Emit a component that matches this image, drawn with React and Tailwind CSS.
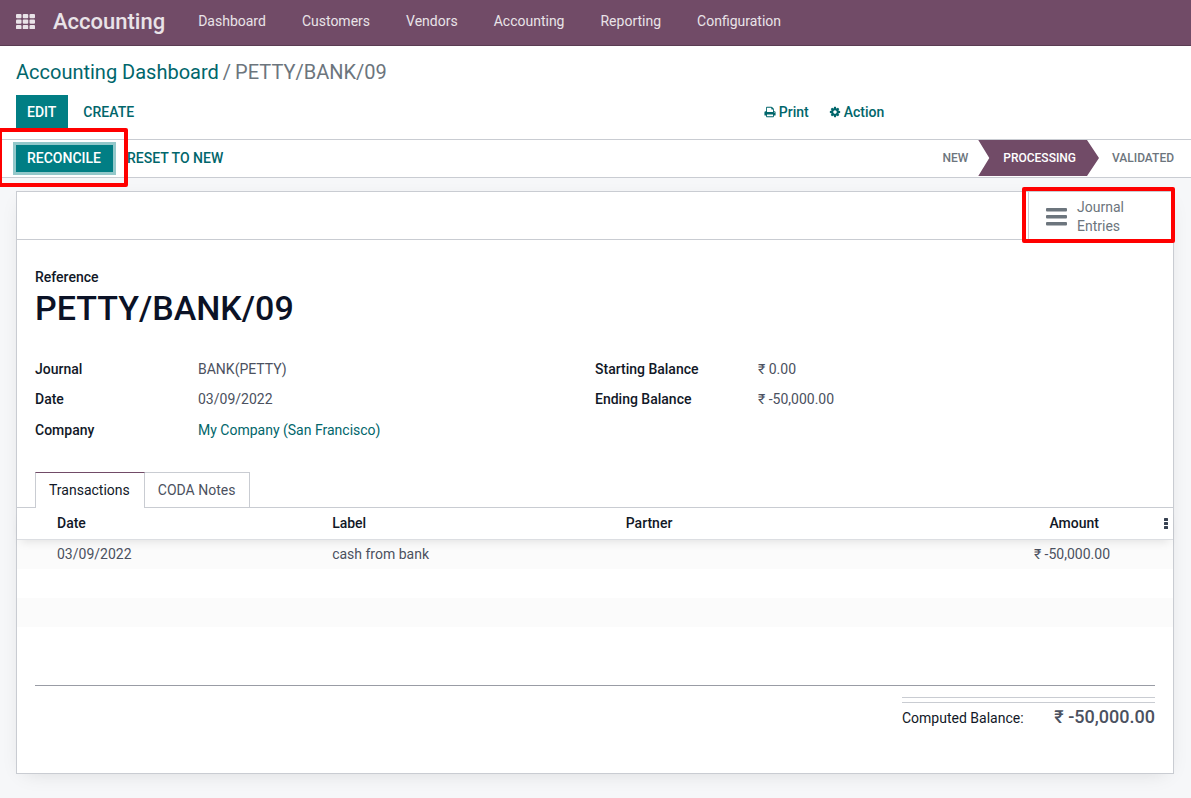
import React from "react";

const MENU = ["Dashboard", "Customers", "Vendors", "Accounting", "Reporting", "Configuration"];

function AppsIcon() {
  return (
    <svg width="19" height="15" viewBox="0 0 19 15" fill="currentColor" aria-hidden="true">
      {[0, 5.5, 11].map((y) =>
        [0, 6.75, 13.5].map((x) => <rect key={`${x}-${y}`} x={x} y={y} width="5.5" height="4.2" rx="1" />)
      )}
    </svg>
  );
}

function PrintIcon() {
  return (
    <svg width="12" height="12" viewBox="0 0 1792 1792" fill="currentColor" aria-hidden="true">
      <path d="M448 1536h896v-256h-896v256zm0-640h896v-384h-160q-40 0-68-28t-28-68v-160h-640v640zm1152 64q0-26-19-45t-45-19-45 19-19 45 19 45 45 19 45-19 19-45zm128 0v416q0 13-9.500 22.500t-22.500 9.500h-224v160q0 40-28 68t-68 28h-960q-40 0-68-28t-28-68v-160h-224q-13 0-22.500-9.500t-9.500-22.500v-416q0-79 56.500-135.500t135.500-56.500h64v-544q0-40 28-68t68-28h672q40 0 88 20t76 48l152 152q28 28 48 76t20 88v256h64q79 0 135.500 56.500t56.500 135.500z" />
    </svg>
  );
}

function CogIcon() {
  return (
    <svg width="12" height="12" viewBox="0 0 1792 1792" fill="currentColor" aria-hidden="true">
      <path d="M1152 896q0-106-75-181t-181-75-181 75-75 181 75 181 181 75 181-75 75-181zm512-109v222q0 12-8 23t-20 13l-185 28q-19 54-39 91 35 50 107 138 10 12 10 25t-9 23q-27 37-99 108t-94 71q-12 0-26-9l-138-108q-44 23-91 38-16 136-29 186-7 28-36 28h-222q-14 0-24.500-8.500t-11.500-21.500l-28-184q-49-16-90-37l-141 107q-10 9-25 9-14 0-25-11-126-114-165-168-7-10-7-23 0-12 8-23 15-21 51-66.500t54-70.500q-27-50-41-99l-183-27q-13-2-21-12.500t-8-23.500v-222q0-12 8-23t19-13l186-28q14-46 39-92-40-57-107-138-10-12-10-24 0-10 9-23 26-36 98.500-107.500t94.500-71.500q13 0 26 10l138 107q44-23 91-38 16-136 29-186 7-28 36-28h222q14 0 24.500 8.500t11.500 21.500l28 184q49 16 90 37l142-107q9-9 24-9 13 0 25 10 129 119 165 170 7 8 7 22 0 12-8 23-15 21-51 66.500t-54 70.500q26 50 41 98l183 28q13 2 21 12.500t8 23.500z" />
    </svg>
  );
}

function BarsIcon() {
  return (
    <svg width="21" height="18" viewBox="0 0 21 18" fill="currentColor" aria-hidden="true">
      <rect x="0" y="0" width="21" height="3.600" rx="1" />
      <rect x="0" y="7" width="21" height="3.600" rx="1" />
      <rect x="0" y="14" width="21" height="3.600" rx="1" />
    </svg>
  );
}

function DotsIcon() {
  return (
    <svg width="4" height="11" viewBox="0 0 4 11" fill="currentColor" aria-hidden="true">
      <rect x="0" y="0" width="4" height="3" rx="0.500" />
      <rect x="0" y="4" width="4" height="3" rx="0.500" />
      <rect x="0" y="8" width="4" height="3" rx="0.500" />
    </svg>
  );
}

function Field({ label, children }) {
  return (
    <div className="flex h-[30px] items-center">
      <dt className="w-[163px] shrink-0 font-medium text-[#111827]">{label}</dt>
      <dd className="text-[#4b5160]">{children}</dd>
    </div>
  );
}

export default function App() {
  return (
    <div className="flex min-h-screen flex-col bg-[#f6f7f9] font-['Roboto',sans-serif] text-[14px] leading-[21px] text-[#111827]">
      <header className="flex h-[46px] items-center border-b border-[#5a3c52] bg-[#714b67] pb-[2px] pl-4 text-[#e9e3e8]">
        <button type="button" aria-label="Apps" className="mr-[18px]">
          <AppsIcon />
        </button>
        <a href="#accounting" className="mr-[33px] text-[22px] font-medium leading-[30px]">Accounting</a>
        <nav className="flex gap-9">
          {MENU.map((item) => (
            <a key={item} href={"#" + item.toLowerCase()}>{item}</a>
          ))}
        </nav>
      </header>

      <section className="border-b border-[#c9ccd2] bg-white px-4 pb-[10px] pt-[11px]">
        <nav aria-label="Breadcrumb" className="mb-2 flex gap-1 text-[20px] leading-[30px] text-[#6c757d]">
          <a href="#dashboard" className="text-[#01666b]">Accounting Dashboard</a>
          <span>/</span>
          <span>PETTY/BANK/09</span>
        </nav>
        <div className="flex">
          <div className="flex w-[64%] gap-1">
            <button type="button" className="h-[34px] bg-[#017e84] pl-[11px] pr-3 font-medium text-white">EDIT</button>
            <button type="button" className="h-[34px] pl-[11px] pr-3 font-medium text-[#01666b]">CREATE</button>
          </div>
          <div className="flex gap-1 font-medium text-[#01666b]">
            <button type="button" className="flex items-center gap-[3px] px-[6px]"><PrintIcon />Print</button>
            <button type="button" className="flex items-center gap-[3px] px-[10px]"><CogIcon />Action</button>
          </div>
        </div>
      </section>

      <section className="flex justify-between border-b border-[#c9ccd2] bg-white px-4">
        <div className="flex items-center">
          <div className="relative">
            <button type="button" className="block h-[27px] bg-[#017e84] pl-[11px] pr-3 font-medium text-white shadow-[0_0_0_3px_#93c8ca]">RECONCILE</button>
            <span aria-hidden="true" className="pointer-events-none absolute -bottom-[15px] -left-[18px] -right-[15px] -top-[17px] z-10 rounded-[2px] border-4 border-[#ff0000]" />
          </div>
          <button type="button" className="px-[14px] font-medium text-[#01666b]">RESET TO NEW</button>
        </div>
        <ol className="flex h-[37px] items-start text-[12px] font-medium text-[#6c757d]">
          <li className="flex h-9 items-center pr-[10px]">NEW</li>
          <li aria-current="step" className="flex h-9 items-center bg-[#714b67] pl-[25px] pr-[23px] text-white [clip-path:polygon(0_0,calc(100%-12px)_0,100%_50%,calc(100%-12px)_100%,0_100%,11px_50%)]">PROCESSING</li>
          <li className="flex h-9 items-center pl-[13px] pr-px">VALIDATED</li>
        </ol>
      </section>

      <main className="mb-6 ml-4 mr-[17px] mt-[13px] border border-[#c9ccd2] bg-white pb-10 shadow-[0_5px_20px_-8px_rgba(0,0,0,0.15)]">
        <div className="flex h-12 justify-end border-b border-[#c9ccd2]">
          <div className="relative">
            <button type="button" className="flex h-[47px] w-[145px] items-center gap-[10px] border-l border-[#c9ccd2] pl-[17px] pt-[3px] text-left leading-[19px] text-[#6c757d]">
              <BarsIcon />
              <span className="w-16">Journal Entries</span>
            </button>
            <span aria-hidden="true" className="pointer-events-none absolute -bottom-1 -left-[6px] -right-[2px] -top-[5px] z-10 rounded-[2px] border-4 border-[#ff0000]" />
          </div>
        </div>

        <div className="px-[18px] pt-[27px]">
          <div className="font-medium">Reference</div>
          <h1 className="text-[34px] font-medium leading-[40px] text-[#0b1226]">PETTY/BANK/09</h1>
          <div className="mt-[26px] grid grid-cols-2">
            <dl>
              <Field label="Journal">BANK(PETTY)</Field>
              <Field label="Date">03/09/2022</Field>
              <div className="pt-px">
                <Field label="Company"><a href="#company" className="text-[#01666b]">My Company (San Francisco)</a></Field>
              </div>
            </dl>
            <dl>
              <Field label="Starting Balance">₹ 0.00</Field>
              <Field label="Ending Balance">₹ -50,000.00</Field>
            </dl>
          </div>
        </div>

        <div role="tablist" className="mt-[27px] flex border-b border-[#c9ccd2] px-[18px]">
          <button type="button" role="tab" aria-selected="true" className="-mb-px h-9 border border-b-0 border-[#c9ccd2] border-t-[#714b67] bg-white pl-[13px] pr-[14px]">Transactions</button>
          <button type="button" role="tab" aria-selected="false" className="h-[35px] border border-b-0 border-l-0 border-[#c9ccd2] pl-[13px] pr-[14px] text-[#4b5160]">CODA Notes</button>
        </div>

        <table className="w-full table-fixed border-separate border-spacing-0 text-left">
          <colgroup>
            <col className="w-[35px]" />
            <col className="w-[23.8%]" />
            <col className="w-[25.4%]" />
            <col />
            <col className="w-[130px]" />
            <col className="w-[58px]" />
          </colgroup>
          <thead className="relative shadow-[0_6px_10px_-4px_rgba(0,0,0,0.1)]">
            <tr className="h-8 bg-white *:border-b *:border-[#dcdee2]">
              <th />
              <th className="px-[5px] font-medium">Date</th>
              <th className="px-[5px] font-medium">Label</th>
              <th className="px-[5px] font-medium">Partner</th>
              <th className="pr-4 text-right font-medium">Amount</th>
              <th>
                <button type="button" aria-label="Optional columns" className="ml-auto mr-[5px] block text-[#374151]"><DotsIcon /></button>
              </th>
            </tr>
          </thead>
          <tbody className="text-[#4b5160]">
            <tr className="h-[29px] bg-[#fbfbfb]">
              <td />
              <td className="px-[5px]">03/09/2022</td>
              <td className="px-[5px]">cash from bank</td>
              <td />
              <td className="pr-[5px] text-right">₹ -50,000.00</td>
              <td />
            </tr>
            <tr className="h-[29px]"><td colSpan={6} /></tr>
            <tr className="h-[29px] bg-[#fbfbfb]"><td colSpan={6} /></tr>
            <tr className="h-[29px]"><td colSpan={6} /></tr>
          </tbody>
        </table>

        <div className="mx-[18px] mt-[29px] flex justify-end border-t border-[#999ca5] pt-[11px]">
          <div className="w-[253px]">
            <div className="h-[6px] border-y border-[#c9ccd2]" />
            <div className="flex h-[30px] items-baseline justify-between leading-[28px]">
              <span>Computed Balance:</span>
              <span className="text-[18px] font-medium text-[#4b5160]">₹ -50,000.00</span>
            </div>
          </div>
        </div>
      </main>
    </div>
  );
}
